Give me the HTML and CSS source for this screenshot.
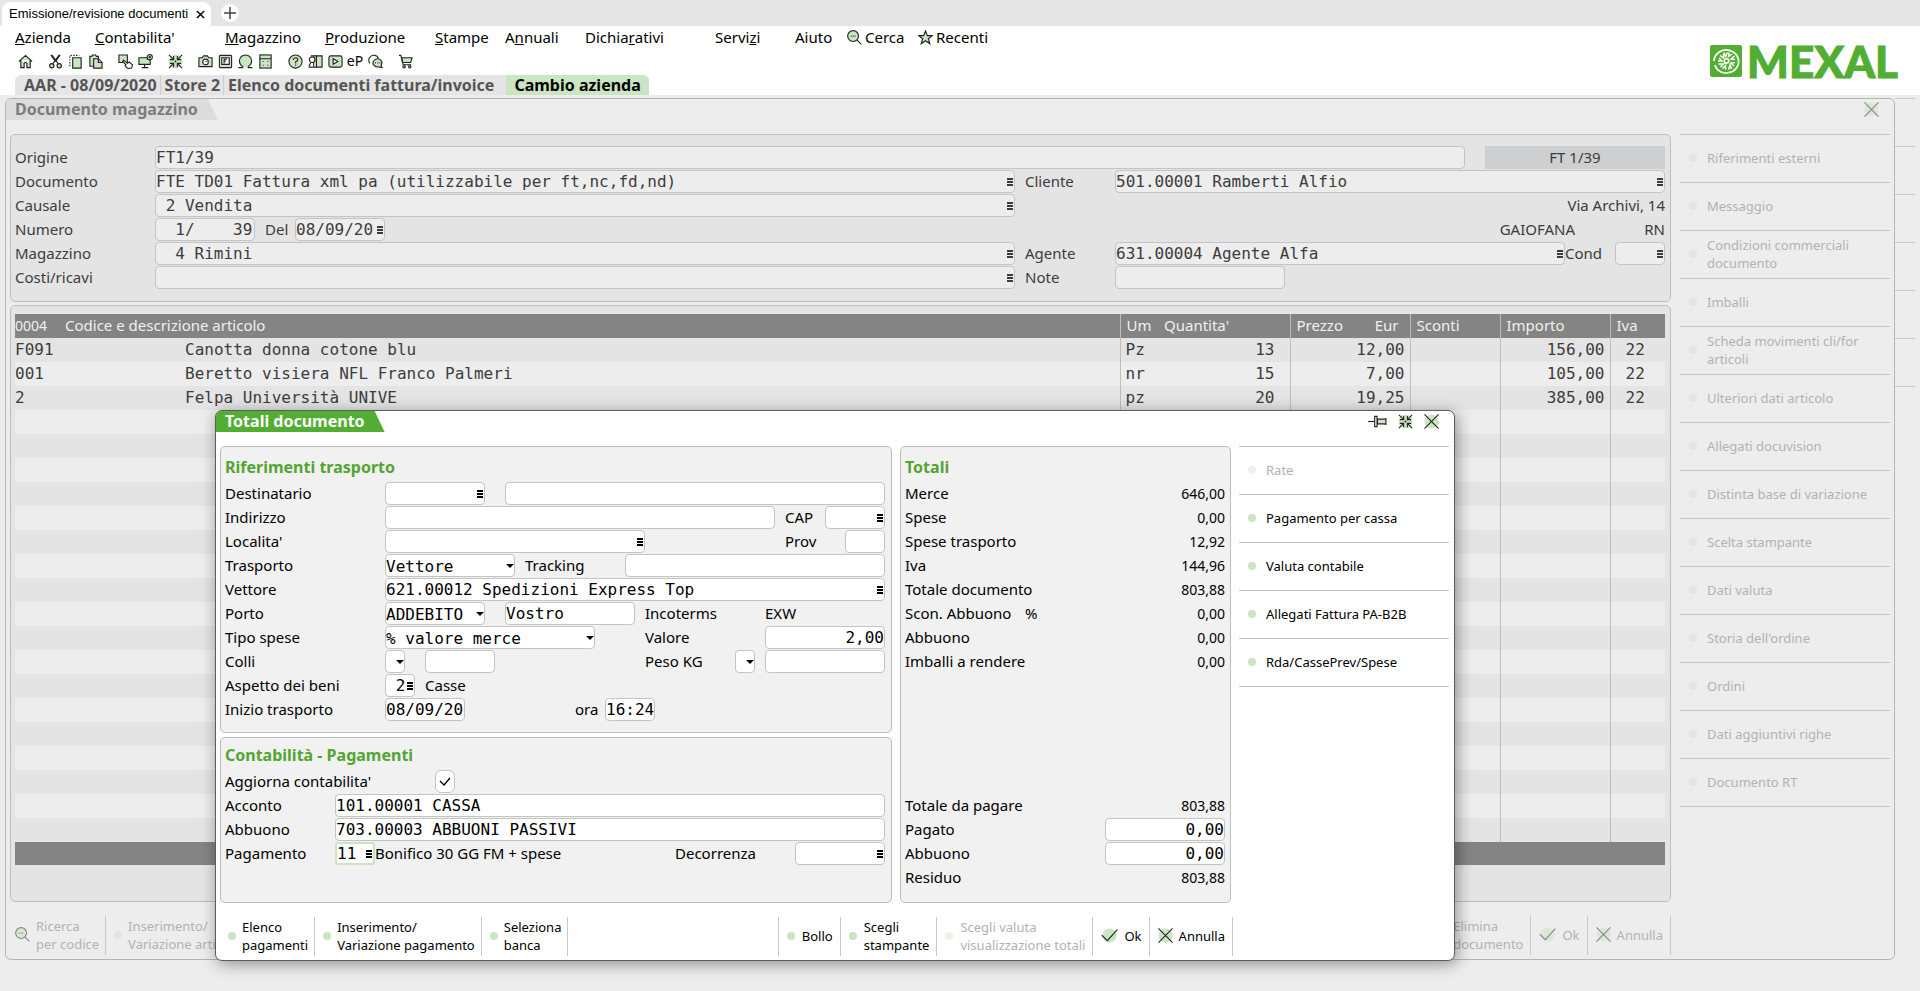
FILE: index.html
```
<!DOCTYPE html>
<html lang="it">
<head>
  <meta charset="UTF-8">
  <title>Emissione/revisione documenti</title>
  <link rel="stylesheet" href="styles.css">
</head>
<body>
<svg class="defs" aria-hidden="true">
  <symbol id="i-close" viewBox="0 0 16 16"><circle class="g" cx="8" cy="8" r="7.5"/><path d="M.5 .5l15 15M15.500 .5l-15 15"/></symbol>
  <symbol id="i-ok" viewBox="0 0 18 16"><circle class="g" cx="9" cy="8" r="7.5"/><path d="M.7 7.500l6 6L17.300 1.800"/></symbol>
  <symbol id="i-shrink" viewBox="0 0 16 16"><circle class="g" cx="8" cy="8" r="7.500"/><path d="M1 1l5 5M2 6h4V2M15 1l-5 5M10 2v4h4M1 15l5-5M2 10h4v4M15 15l-5-5M14 10h-4v4"/><circle class="k" cx="8" cy="8" r="1"/></symbol>
  <symbol id="i-search" viewBox="0 0 16 16"><circle class="gs" cx="6.500" cy="6.500" r="5.800"/><path d="M10.700 10.700L15.300 15.300M4 6.500h1M6 6.500h1M8 6.500h1"/></symbol>
  <symbol id="i-star" viewBox="0 0 16 16"><path class="gs" d="M8 1l2 5h5.200l-4.200 3.300 1.600 5.400L8 11.500l-4.600 3.200L5 9.300.8 6H6z"/></symbol>
</svg>

<div class="tab-strip">
  <div class="tab">
    <span>Emissione/revisione documenti</span>
    <button class="tab-close" aria-label="Chiudi scheda"><svg viewBox="0 0 10 10"><path d="M1 1l8 8M9 1l-8 8"/></svg></button>
  </div>
  <button class="tab-new" aria-label="Nuova scheda"><svg viewBox="0 0 14 14"><path d="M7 1v12M1 7h12"/></svg></button>
</div>

<header class="top">
  <div class="top-left">
    <nav class="menu">
      <a href="#"><u>A</u>zienda</a>
      <a href="#"><u>C</u>ontabilita'</a>
      <a href="#"><u>M</u>agazzino</a>
      <a href="#"><u>P</u>roduzione</a>
      <a href="#"><u>S</u>tampe</a>
      <a href="#">A<u>n</u>nuali</a>
      <a href="#">Dichia<u>r</u>ativi</a>
      <a href="#">Servi<u>z</u>i</a>
      <a href="#">Aiuto</a>
      <a href="#"><svg class="ic"><use href="#i-search"/></svg>Cerca</a>
      <a href="#"><svg class="ic"><use href="#i-star"/></svg>Recenti</a>
    </nav>
    <div class="toolbar">
      <div class="group">
        <button aria-label="Home"><svg class="ic" viewBox="0 0 16 16"><path class="gs" d="M1 8l7-6.500L15 8M3 6.500V14.500h3.500V10q1.500-2 3 0v4.500H13V6.500"/></svg></button>
      </div>
      <div class="group">
        <button aria-label="Taglia"><svg class="ic" viewBox="0 0 16 16"><path d="M4 1l7 9.500M12 1L5 10.500M3 1l5 7M13 1L8 8"/><circle class="gs" cx="4" cy="12.500" r="2.300"/><circle class="gs" cx="12" cy="12.500" r="2.300"/></svg></button>
        <button aria-label="Copia"><svg class="ic" viewBox="0 0 16 16"><path stroke-dasharray="1.500 1.500" d="M2 13V1.500h10"/><path class="gs" d="M5 4h9v11H5z"/></svg></button>
        <button aria-label="Incolla"><svg class="ic" viewBox="0 0 16 16"><path class="gs" d="M2 2.500h2L5 1h3l1 1.500h2V13H2z"/><path class="gs" d="M6 5h5l4 4v6H6zM11 5v4h4"/></svg></button>
      </div>
      <div class="group">
        <button aria-label="Seleziona"><svg class="ic" viewBox="0 0 16 16"><path class="gs" d="M1 1h9v8H1z"/><path class="ws" d="M6 6.500l4 3.500 2-1.500 3.500 3-1 3.500-4 .5-3-3 1-1L5 8z"/></svg></button>
        <button aria-label="Impostazioni video"><svg class="ic" viewBox="0 0 16 16"><path class="gs" d="M1 4h12v7H1z"/><path d="M7 11v3M4 14.500h7"/><circle class="ws" cx="12.500" cy="3.500" r="2.800"/><circle cx="12.500" cy="3.500" r=".8"/></svg></button>
      </div>
      <div class="group">
        <button aria-label="Riduci"><svg class="ic"><use href="#i-shrink"/></svg></button>
      </div>
      <div class="group">
        <button aria-label="Foto"><svg class="ic" viewBox="0 0 16 16"><path class="gs" d="M1 4h3.500L6 2h4l1.500 2H15v9.500H1z"/><circle class="ws" cx="8" cy="8.500" r="3"/><path d="M8 8.500l1-1"/></svg></button>
        <button aria-label="Tasti funzione"><svg class="ic" viewBox="0 0 16 16"><rect class="gs" x="1.500" y="1.500" width="13" height="13" rx="1"/><path class="ws" d="M4 4h8v7H4z"/><path d="M6.500 10V5.500h3M6.500 7.500h2"/></svg></button>
        <button aria-label="Omega"><svg class="ic" viewBox="0 0 16 16"><path class="gs" d="M.5 14.500h4.500v-1Q1.500 11 1.500 7.500a6.500 6.500 0 0 1 13 0Q14.500 11 11 13.500v1h4.500"/></svg></button>
        <button aria-label="Calcolatrice"><svg class="ic" viewBox="0 0 16 16"><rect class="gs" x="2" y="1" width="12" height="14"/><path d="M2 5h12M5 8h1M10 8h1M5 12h1M10 12h1"/></svg></button>
      </div>
      <div class="group">
        <button aria-label="Guida"><svg class="ic" viewBox="0 0 16 16"><circle class="gs" cx="8" cy="8" r="7"/><path d="M5.500 6.200Q6 4 8.200 4T10.500 6.200Q10.300 7.300 8.200 8.300V10M8.200 11.300v1.200"/></svg></button>
        <button aria-label="Manuale"><svg class="ic" viewBox="0 0 16 16"><path class="gs" d="M9 2h6v12H9z"/><path d="M9 14V2H3M.5 14h8.500"/><circle class="ws" cx="4.500" cy="6" r="3"/><path d="M3 9l-2 4M6 9v4"/></svg></button>
        <button aria-label="Video"><svg class="ic" viewBox="0 0 16 16"><rect class="gs" x="1" y="2" width="14" height="12" rx="2"/><path class="ws" d="M5.500 5l5 3-5 3z"/></svg></button>
        <button aria-label="eP" class="ep">eP</button>
        <button aria-label="Chat"><svg class="ic" viewBox="0 0 16 16"><path class="ws" d="M2 10Q0 7 1.500 4 4 .5 7.500 1.500 10 2 11 4.500"/><path class="gs" d="M15 14.500l-1-2.500Q16 9 13.500 6.500 10.500 4 7.500 6 4.500 8 5.500 11q2 3.500 6 2.800z"/><path d="M7.500 9.500h1M10 9.500h1M12.300 9.500h1"/></svg></button>
      </div>
      <div class="group">
        <button aria-label="Carrello"><svg class="ic" viewBox="0 0 16 16"><path class="gs" d="M4 4h11l-1.500 5H5z"/><path d="M1 1.500h2l2.500 10H14"/><circle class="gs" cx="6.500" cy="13.500" r="1.300"/><circle class="gs" cx="12.500" cy="13.500" r="1.300"/></svg></button>
      </div>
    </div>
    <div class="context">
      <span>AAR - 08/09/2020</span><span>Store 2</span><span>Elenco documenti fattura/invoice</span>
      <button>Cambio azienda</button>
    </div>
  </div>
  <div class="logo">
    <svg viewBox="0 0 32 32">
      <rect width="32" height="32" rx="2" fill="#52ae32"/>
      <g fill="none" stroke="#fff">
        <path stroke-width="1.800" d="M4 16a12.300 11.500 0 1 1 3 8M5 20q.5 2.500 3 5"/>
        <circle cx="16.500" cy="16" r="2.200" stroke-width="1.600"/>
        <path stroke-width="1.500" d="M14 7.500l1.500 4 2-4M19 7.500l-.5 4 3.500-2.500M24.500 11l-3.500 3 4 .5M25 17.500l-4 .500 3 3M21.500 24l-1.500-4 -1.500 4.500M15.500 24.500v-4l-3 3M10.500 22l3-3h-5M8 16h4l-3-3M10 10.500l3.500 2.500v-4"/>
      </g>
    </svg>
    <span>MEXAL</span>
  </div>
</header>

<main class="workspace">
  <section class="window">
    <div class="window-head">
      <h1>Documento magazzino</h1>
      <button class="close" aria-label="Chiudi"><svg class="ic"><use href="#i-close"/></svg></button>
    </div>
    <div class="window-body">
      <div class="window-main">
        <form class="panel doc">
          <div class="row">
            <label for="origine">Origine</label>
            <span class="field grow"><input id="origine" value="FT1/39"></span>
            <span class="badge">FT 1/39</span>
          </div>
          <div class="cols">
            <div class="doc-left">
              <div class="row"><label for="documento">Documento</label><span class="field grow"><input id="documento" value="FTE TD01 Fattura xml pa (utilizzabile per ft,nc,fd,nd)"><button type="button" class="pick" aria-label="Elenco"></button></span></div>
              <div class="row"><label for="causale">Causale</label><span class="field grow"><input id="causale" value=" 2 Vendita"><button type="button" class="pick" aria-label="Elenco"></button></span></div>
              <div class="row">
                <label for="numero">Numero</label><span class="field w100"><input id="numero" value="  1/    39"></span>
                <label class="l40" for="del">Del</label><span class="field w90"><input id="del" value="08/09/20"><button type="button" class="pick" aria-label="Elenco"></button></span>
              </div>
              <div class="row"><label for="magazzino">Magazzino</label><span class="field grow"><input id="magazzino" value="  4 Rimini"><button type="button" class="pick" aria-label="Elenco"></button></span></div>
              <div class="row"><label for="costi">Costi/ricavi</label><span class="field grow"><input id="costi"><button type="button" class="pick" aria-label="Elenco"></button></span></div>
            </div>
            <div class="doc-right">
              <div class="row"><label for="cliente">Cliente</label><span class="field grow"><input id="cliente" value="501.00001 Ramberti Alfio"><button type="button" class="pick" aria-label="Elenco"></button></span></div>
              <div class="row end"><span>Via Archivi, 14</span></div>
              <div class="row end"><span>GAIOFANA</span><span class="prov">RN</span></div>
              <div class="row">
                <label for="agente">Agente</label><span class="field grow"><input id="agente" value="631.00004 Agente Alfa"><button type="button" class="pick" aria-label="Elenco"></button></span>
                <label class="l50" for="cond">Cond</label><span class="field w50"><input id="cond"><button type="button" class="pick" aria-label="Elenco"></button></span>
              </div>
              <div class="row"><label for="note">Note</label><span class="field w170"><input id="note"></span></div>
            </div>
          </div>
        </form>

        <div class="panel grid-panel">
          <table>
            <colgroup><col class="c-code"><col><col class="c-um"><col class="c-qty"><col class="c-price"><col class="c-disc"><col class="c-amt"><col class="c-iva"></colgroup>
            <thead>
              <tr>
                <th colspan="2" class="first"><span>0004</span>Codice e descrizione articolo</th>
                <th class="line">Um</th><th>Quantita'</th>
                <th class="line price"><span>Prezzo</span><span>Eur</span></th>
                <th class="line">Sconti</th><th class="line">Importo</th><th class="line">Iva</th>
              </tr>
            </thead>
            <tbody id="righe">
              <tr><td>F091</td><td>Canotta donna cotone blu</td><td class="line">Pz</td><td class="num qty">13</td><td class="line num">12,00</td><td class="line"></td><td class="line num">156,00</td><td class="line iva">22</td></tr>
              <tr><td>001</td><td>Beretto visiera NFL Franco Palmeri</td><td class="line">nr</td><td class="num qty">15</td><td class="line num">7,00</td><td class="line"></td><td class="line num">105,00</td><td class="line iva">22</td></tr>
              <tr><td>2</td><td>Felpa Università UNIVE</td><td class="line">pz</td><td class="num qty">20</td><td class="line num">19,25</td><td class="line"></td><td class="line num">385,00</td><td class="line iva">22</td></tr>
            </tbody>
            <tfoot><tr><td colspan="8"></td></tr></tfoot>
          </table>
        </div>

        <div class="actions off">
          <button disabled class="search"><svg class="ic"><use href="#i-search"/></svg>Ricerca<br>per codice</button>
          <button disabled><i class="dot"></i>Inserimento/<br>Variazione articolo</button>
          <span class="grow"></span>
          <button disabled><i class="dot"></i>Elimina<br>documento</button>
          <button disabled><svg class="ic ok"><use href="#i-ok"/></svg>Ok</button>
          <button disabled><svg class="ic"><use href="#i-close"/></svg>Annulla</button>
        </div>
      </div>

      <aside class="side off">
        <button disabled><i class="dot"></i><span>Riferimenti esterni</span></button>
        <button disabled><i class="dot"></i><span>Messaggio</span></button>
        <button disabled><i class="dot"></i><span>Condizioni commerciali documento</span></button>
        <button disabled><i class="dot"></i><span>Imballi</span></button>
        <button disabled><i class="dot"></i><span>Scheda movimenti cli/for articoli</span></button>
        <button disabled><i class="dot"></i><span>Ulteriori dati articolo</span></button>
        <button disabled><i class="dot"></i><span>Allegati docuvision</span></button>
        <button disabled><i class="dot"></i><span>Distinta base di variazione</span></button>
        <button disabled><i class="dot"></i><span>Scelta stampante</span></button>
        <button disabled><i class="dot"></i><span>Dati valuta</span></button>
        <button disabled><i class="dot"></i><span>Storia dell'ordine</span></button>
        <button disabled><i class="dot"></i><span>Ordini</span></button>
        <button disabled><i class="dot"></i><span>Dati aggiuntivi righe</span></button>
        <button disabled><i class="dot"></i><span>Documento RT</span></button>
      </aside>
    </div>
  </section>

  <!-- bordo della finestra sottostante -->
  <div class="behind"><i></i><i></i><i></i><i></i><i></i><i></i></div>

  <section class="dialog" role="dialog" aria-labelledby="dlgTitle">
    <div class="window-head">
      <h2 id="dlgTitle">Totali documento</h2>
      <div class="dialog-tools">
        <button aria-label="Fissa"><svg class="ic pin" viewBox="0 0 20 16"><path d="M0 8h7"/><path class="gs" d="M10 5.500h7l2-.5v6l-2-.5h-7z"/><path class="ws" d="M7 2.500h2.500v11H7z"/></svg></button>
        <button aria-label="Riduci"><svg class="ic"><use href="#i-shrink"/></svg></button>
        <button aria-label="Chiudi"><svg class="ic"><use href="#i-close"/></svg></button>
      </div>
    </div>
    <div class="dialog-body">
      <form class="dialog-form">
        <fieldset class="panel transport">
          <h3>Riferimenti trasporto</h3>
          <div class="row"><label for="dest">Destinatario</label><span class="field w100"><input id="dest"><button type="button" class="pick" aria-label="Elenco"></button></span><span class="field grow ml20"><input aria-label="Nome destinatario"></span></div>
          <div class="row"><label for="ind">Indirizzo</label><span class="field grow"><input id="ind"></span><label class="l50" for="cap">CAP</label><span class="field w60"><input id="cap"><button type="button" class="pick" aria-label="Elenco"></button></span></div>
          <div class="row"><label for="loc">Localita'</label><span class="field w260"><input id="loc"><button type="button" class="pick" aria-label="Elenco"></button></span><span class="grow"></span><label class="l60" for="prov">Prov</label><span class="field w40"><input id="prov"></span></div>
          <div class="row"><label for="trasp">Trasporto</label><select id="trasp" class="w130"><option>Vettore</option></select><label class="l110" for="track">Tracking</label><span class="field grow"><input id="track"></span></div>
          <div class="row"><label for="vett">Vettore</label><span class="field grow"><input id="vett" value="621.00012 Spedizioni Express Top"><button type="button" class="pick" aria-label="Elenco"></button></span></div>
          <div class="row"><label for="porto">Porto</label><select id="porto" class="w100"><option>ADDEBITO</option></select><span class="field w130 ml20"><input aria-label="Descrizione porto" value="Vostro"></span><span class="grow"></span><span class="w120">Incoterms</span><span class="w120">EXW</span></div>
          <div class="row"><label for="tipo">Tipo spese</label><select id="tipo" class="w210"><option>% valore merce</option></select><span class="grow"></span><label class="w120" for="valore">Valore</label><span class="field w120"><input id="valore" class="num" value="2,00"></span></div>
          <div class="row"><label for="colli">Colli</label><select id="colli" class="w20"><option></option></select><span class="field w70 ml20"><input aria-label="Numero colli"></span><span class="grow"></span><label class="w90" for="peso">Peso KG</label><select class="w20" aria-label="Tipo peso"><option></option></select><span class="field w120 ml10"><input id="peso"></span></div>
          <div class="row"><label for="aspetto">Aspetto dei beni</label><span class="field w30"><input id="aspetto" value=" 2"><button type="button" class="pick" aria-label="Elenco"></button></span><span class="ml10">Casse</span></div>
          <div class="row"><label for="inizio">Inizio trasporto</label><span class="field w80"><input id="inizio" value="08/09/20"></span><label class="ora" for="ora">ora</label><span class="field w50"><input id="ora" value="16:24"></span></div>
        </fieldset>
        <fieldset class="panel payments">
          <h3>Contabilità - Pagamenti</h3>
          <div class="row check-row"><label for="aggiorna">Aggiorna contabilita'</label><input type="checkbox" id="aggiorna" checked></div>
          <div class="row"><label for="acconto">Acconto</label><span class="field grow"><input id="acconto" value="101.00001 CASSA"></span></div>
          <div class="row"><label for="abb">Abbuono</label><span class="field grow"><input id="abb" value="703.00003 ABBUONI PASSIVI"></span></div>
          <div class="row"><label for="pag">Pagamento</label><span class="field w40 active"><input id="pag" value="11"><button type="button" class="pick" aria-label="Elenco"></button></span><span class="grow">Bonifico 30 GG FM + spese</span><label class="w120" for="dec">Decorrenza</label><span class="field w90"><input id="dec"><button type="button" class="pick" aria-label="Elenco"></button></span></div>
        </fieldset>
      </form>

      <div class="panel totals">
        <h3>Totali</h3>
        <div class="row"><span>Merce</span><b>646,00</b></div>
        <div class="row"><span>Spese</span><b>0,00</b></div>
        <div class="row"><span>Spese trasporto</span><b>12,92</b></div>
        <div class="row"><span>Iva</span><b>144,96</b></div>
        <div class="row"><span>Totale documento</span><b>803,88</b></div>
        <div class="row"><span class="w120">Scon. Abbuono</span><span>%</span><b>0,00</b></div>
        <div class="row"><span>Abbuono</span><b>0,00</b></div>
        <div class="row"><span>Imballi a rendere</span><b>0,00</b></div>
        <div class="row due"><span>Totale da pagare</span><b>803,88</b></div>
        <div class="row"><label for="pagato">Pagato</label><span class="field w120"><input id="pagato" class="num" value="0,00"></span></div>
        <div class="row"><label for="abb2">Abbuono</label><span class="field w120"><input id="abb2" class="num" value="0,00"></span></div>
        <div class="row"><span>Residuo</span><b>803,88</b></div>
      </div>

      <aside class="side">
        <button disabled><i class="dot"></i><span>Rate</span></button>
        <button><i class="dot"></i><span>Pagamento per cassa</span></button>
        <button><i class="dot"></i><span>Valuta contabile</span></button>
        <button><i class="dot"></i><span>Allegati Fattura PA-B2B</span></button>
        <button><i class="dot"></i><span>Rda/CassePrev/Spese</span></button>
      </aside>
    </div>
    <div class="actions">
      <button><i class="dot"></i>Elenco<br>pagamenti</button>
      <button><i class="dot"></i>Inserimento/<br>Variazione pagamento</button>
      <button><i class="dot"></i>Seleziona<br>banca</button>
      <span class="grow sep"></span>
      <button><i class="dot"></i>Bollo</button>
      <button><i class="dot"></i>Scegli<br>stampante</button>
      <button disabled><i class="dot"></i>Scegli valuta<br>visualizzazione totali</button>
      <button><svg class="ic ok"><use href="#i-ok"/></svg>Ok</button>
      <button><svg class="ic"><use href="#i-close"/></svg>Annulla</button>
    </div>
  </section>
</main>

<script>
  const righe = document.getElementById('righe');

  // righe vuote fino a riempire la griglia
  while (righe.rows.length < 21) {
    const tr = righe.insertRow();
    for (let i = 0; i < 8; i++) {
      const td = tr.insertCell();
      if (i !== 0 && i !== 1 && i !== 3) td.className = 'line';
    }
  }

  // testo dei pulsanti su due righe accanto all'icona
  document.querySelectorAll('.actions button').forEach(btn => {
    const span = document.createElement('span');
    while (btn.children[0].nextSibling) span.appendChild(btn.children[0].nextSibling);
    btn.appendChild(span);
  });
</script>
</body>
</html>
```
FILE: styles.css
```
* { box-sizing: border-box; }

body {
  margin: 0;
  min-height: 100vh;
  background: #ededed;
  color: #000;
  font: 15px/22px "Noto Sans", sans-serif;
}

button, input, select {
  font: inherit;
  color: inherit;
  margin: 0;
  padding: 0;
  border: none;
  background: none;
}

h1, h2, h3 {
  margin: 0;
  font-size: 16px;
  font-weight: bold;
}

.defs {
  display: none;
}

.ic {
  width: 15px;
  height: 15px;
  flex: none;
  fill: none;
  stroke: #222;
  stroke-width: 1.2;
}

.g { fill: #c9e5c1; stroke: none; }
.gs { fill: #c9e5c1; }
.ws { fill: #fff; }
.k { fill: #222; stroke: none; }

.grow { flex: 1; min-width: 0; }

/* schede */
.tab-strip {
  display: flex;
  align-items: center;
  height: 26px;
  background: #e5e5e5;
  padding-left: 2px;
}

.tab {
  display: flex;
  align-items: center;
  gap: 8px;
  align-self: flex-end;
  height: 24px;
  padding: 0 6px 0 7px;
  background: #fff;
  border-radius: 8px 8px 0 0;
  font: 13px/24px "Liberation Sans", sans-serif;
}

.tab-close, .tab-new {
  display: flex;
  align-items: center;
  justify-content: center;
}

.tab-close svg { width: 9px; height: 9px; stroke: #000; stroke-width: 1.6; }

.tab-new {
  width: 18px;
  height: 18px;
  margin-left: 10px;
  border-radius: 50%;
  background: #fff;
}

.tab-new svg { width: 14px; height: 14px; stroke: #444; stroke-width: 1.5; }

/* testata */
.top {
  display: flex;
  justify-content: space-between;
  height: 69px;
  background: #fff;
  padding: 0 22px 0 15px;
}

.menu {
  display: grid;
  grid-template-columns: 80px 130px 100px 110px 70px 80px 130px 80px 52px 71px auto;
  height: 22px;
}

.menu a {
  display: flex;
  align-items: center;
  color: #000;
  text-decoration: none;
  white-space: nowrap;
}

.menu .ic { margin-right: 3px; }

.toolbar {
  display: flex;
  gap: 10px;
  height: 27px;
  padding-bottom: 1px;
}

.group { display: flex; }

.group button {
  display: flex;
  align-items: center;
  justify-content: center;
  width: 20px;
}

.group .ep { font-size: 14px; }

.context {
  display: flex;
  height: 20px;
  line-height: 20px;
  width: max-content;
  background: #e5e5e5;
  border-radius: 6px 6px 0 0;
  padding-left: 5px;
  color: #555;
  font-size: 16px;
  font-weight: bold;
}

.context span { padding: 0 3px 0 4px; }
.context span + span { border-left: 1px solid #ccc; }
.context span:nth-child(3) { padding-right: 12px; }

.context button {
  background: #c9e5c1;
  color: #000;
  padding: 0 8px;
  border-radius: 0 6px 0 0;
}

.logo {
  display: flex;
  align-items: center;
  gap: 5px;
  color: #52ae32;
  font: 900 44px/44px Lato, sans-serif;
  -webkit-text-stroke: 1px #52ae32;
}

.logo svg { width: 32px; height: 32px; }

/* finestre */
.workspace {
  position: relative;
  display: flex;
  padding: 3px 5px 30px;
}

.window {
  flex: 1;
  border: 1px solid #b4b4b4;
  border-radius: 6px;
  color: #3c3c3c;
}

.window-head {
  display: flex;
  justify-content: space-between;
  height: 35px;
}

.window-head h1, .window-head h2 {
  height: 21px;
  line-height: 21px;
  padding: 0 20px 0 9px;
  border-top-left-radius: 5px;
  clip-path: polygon(0 0, calc(100% - 10px) 0, 100% 100%, 0 100%);
}

.window-head h1 { background: #dcdcdc; color: #7c7c7c; }
.window-head h2 { background: #52ae32; color: #fff; }

.close { height: 21px; margin-right: 15px; }

.window-head button { display: flex; align-items: center; }

.window .ic { opacity: .5; }

.window-body {
  display: flex;
  gap: 9px;
  padding: 0 4px;
}

.window-main { flex: 1; min-width: 0; }

.behind {
  width: 20px;
  display: flex;
  flex-direction: column;
  border-top: 1px solid #c8c8c8;
}

.behind i {
  height: 48px;
  border-bottom: 1px solid #c8c8c8;
}

.panel {
  margin: 0;
  min-width: 0;
  border: 1px solid #bebebe;
  border-radius: 5px;
  padding: 11px 5px 11px 4px;
}

.window .panel { background: #e4e4e4; }
.dialog .panel { background: #f1f1f1; }

/* righe di campi */
.row {
  display: flex;
  height: 24px;
  padding-bottom: 1px;
  line-height: 23px;
  white-space: nowrap;
}

.field {
  display: flex;
  align-items: center;
  overflow: hidden;
  border: 1px solid #c4c4c4;
  border-radius: 4px;
  background: #ededed;
}

.field:not(.grow), select { flex: none; }

.dialog .field, .dialog select { background-color: #fff; }

.field input, select, td {
  font-family: "DejaVu Sans Mono", monospace;
  font-size: 16px;
}

.field input {
  flex: 1;
  width: 0;
  min-width: 0;
  height: 21px;
  outline: none;
}

.field.active { border: 2px solid #c9e5c1; border-radius: 3px; }

.num { text-align: right; }

.pick {
  width: 6px;
  height: 8px;
  margin: 0 1px 0 0;
  background: repeating-linear-gradient(#000 0 2px, transparent 2px 3px);
}

.window .pick { opacity: .75; }

select {
  appearance: none;
  border: 1px solid #c4c4c4;
  border-radius: 4px;
  background: url('data:image/svg+xml,<svg xmlns="http://www.w3.org/2000/svg" width="8" height="4"><path d="M0 0h8L4 4z"/></svg>') no-repeat right center;
}

.w20 { width: 20px; }
.w30 { width: 30px; }
.w40 { width: 40px; }
.w50 { width: 50px; }
.w60 { width: 60px; }
.w70 { width: 70px; }
.w80 { width: 80px; }
.row .w90 { width: 90px; }
.w100 { width: 100px; }
.row .w120 { width: 120px; }
.w130 { width: 130px; }
.w170 { width: 170px; }
.w210 { width: 210px; }
.w260 { width: 260px; }
.ml10 { margin-left: 10px; }
.ml20 { margin-left: 20px; }

.doc label { width: 140px; }
.doc-right label { width: 90px; }
.doc .row .l40 { width: 40px; padding-left: 10px; }
.doc .row .l50 { width: 50px; }

.badge {
  width: 180px;
  margin-left: 20px;
  background: #cecfd1;
  text-align: center;
}

.cols { display: flex; gap: 10px; }
.doc-left { flex: 1000; min-width: 0; }
.doc-right { flex: 640; min-width: 0; }
.end { justify-content: flex-end; }
.prov { width: 90px; text-align: right; }

/* griglia articoli */
.grid-panel {
  margin-top: 3px;
  padding: 8px 5px 36px 4px;
}

table {
  width: 100%;
  table-layout: fixed;
  border-collapse: collapse;
}

th, td {
  height: 24px;
  line-height: 22px;
  padding: 0 5px;
  text-align: left;
  white-space: nowrap;
}

th {
  font-weight: normal;
  color: #f0f0f0;
  line-height: 20px;
  padding: 0 0 2px 6px;
}

thead tr, tfoot tr { background: #848484; }
tbody tr:nth-child(even) { background: #ededed; }
td.line, th.line { border-left: 1px solid #bebebe; }
td.num { text-align: right; }
td.qty { padding-right: 15px; }
td.iva { padding-left: 15px; }
td:first-child, .first { padding-left: 0; }
tfoot td { height: 23px; }
.first span { display: inline-block; width: 50px; font-size: 14px; }
.price span + span { float: right; padding-right: 11px; }

.c-code { width: 165px; }
.c-um { width: 38px; }
.c-qty { width: 132px; }
.c-price { width: 120px; }
.c-disc { width: 90px; }
.c-amt { width: 110px; }
.c-iva { width: 55px; }

/* pulsanti laterali e in basso */
.dot {
  width: 8px;
  height: 8px;
  flex: none;
  border-radius: 50%;
  background: #c9e5c1;
}

button:disabled { color: #b2b2b2; }
.dialog button:disabled .dot { opacity: .4; }
.off .dot { background: #dfe7dc; }

.side {
  width: 210px;
  flex: none;
  border-top: 1px solid #c4c4c4;
  font-size: 13px;
  line-height: 18px;
}

.side button {
  display: flex;
  align-items: center;
  gap: 10px;
  width: 100%;
  height: 48px;
  padding: 0 20px 2px 9px;
  border-bottom: 1px solid #c4c4c4;
  text-align: left;
}

.actions {
  display: flex;
  padding: 14px 0 4px;
  font-size: 13px;
  line-height: 18px;
}

.actions button, .actions .sep {
  display: flex;
  align-items: center;
  gap: 7px;
  height: 39px;
  padding: 0 7px 2px 8px;
  border-right: 1px solid #c8c8c8;
  text-align: left;
  white-space: nowrap;
}

.actions .ok { width: 17px; }
.actions button:has(~ .grow) { gap: 6px; padding-right: 6px; }
.actions .search { padding-left: 5px; }
.actions .grow ~ button:has(.ic) { gap: 6px; }

/* finestra totali */
.dialog {
  position: absolute;
  top: 315px;
  left: 215px;
  right: 465px;
  background: #fff;
  border: 1px solid #5c5c5c;
  border-radius: 7px;
  box-shadow: 2px 3px 16px rgba(0, 0, 0, .4);
}

.dialog-tools {
  display: flex;
  gap: 11px;
  height: 21px;
  padding-right: 15px;
}

.pin.ic { width: 19px; }

.dialog-body {
  display: flex;
  gap: 8px;
  padding: 0 5px 0 4px;
}

.dialog-form { flex: 1; min-width: 0; }

.dialog h3 {
  height: 27px;
  line-height: 24px;
  color: #52a532;
}

.transport { padding: 8px 6px 10px 4px; }
.transport label { width: 160px; }
.transport .l50 { width: 50px; padding-left: 10px; }
.transport .l60 { width: 60px; }
.transport .l110 { width: 110px; padding-left: 10px; }
.transport .ora { width: 140px; padding-left: 110px; }

.payments { margin-top: 4px; padding: 5px 6px 36px 4px; }
.payments label { width: 110px; }
.payments .check-row label { width: 210px; }

input[type=checkbox] {
  appearance: none;
  width: 20px;
  height: 23px;
  border: 1px solid #c4c4c4;
  border-radius: 6px;
  background: #fff url('data:image/svg+xml,<svg xmlns="http://www.w3.org/2000/svg" width="12" height="9"><path d="M1 4l4 4 6-7" fill="none" stroke="black" stroke-width="1.300"/></svg>') no-repeat center;
}

.totals { width: 331px; padding: 8px 5px 10px 4px; }
.totals b { margin-left: auto; font-weight: normal; font-size: 14px; }
.totals .field { margin-left: auto; }
.totals .due { margin-top: 120px; }

.dialog .actions { padding: 14px 221px 4px 4px; }
```
